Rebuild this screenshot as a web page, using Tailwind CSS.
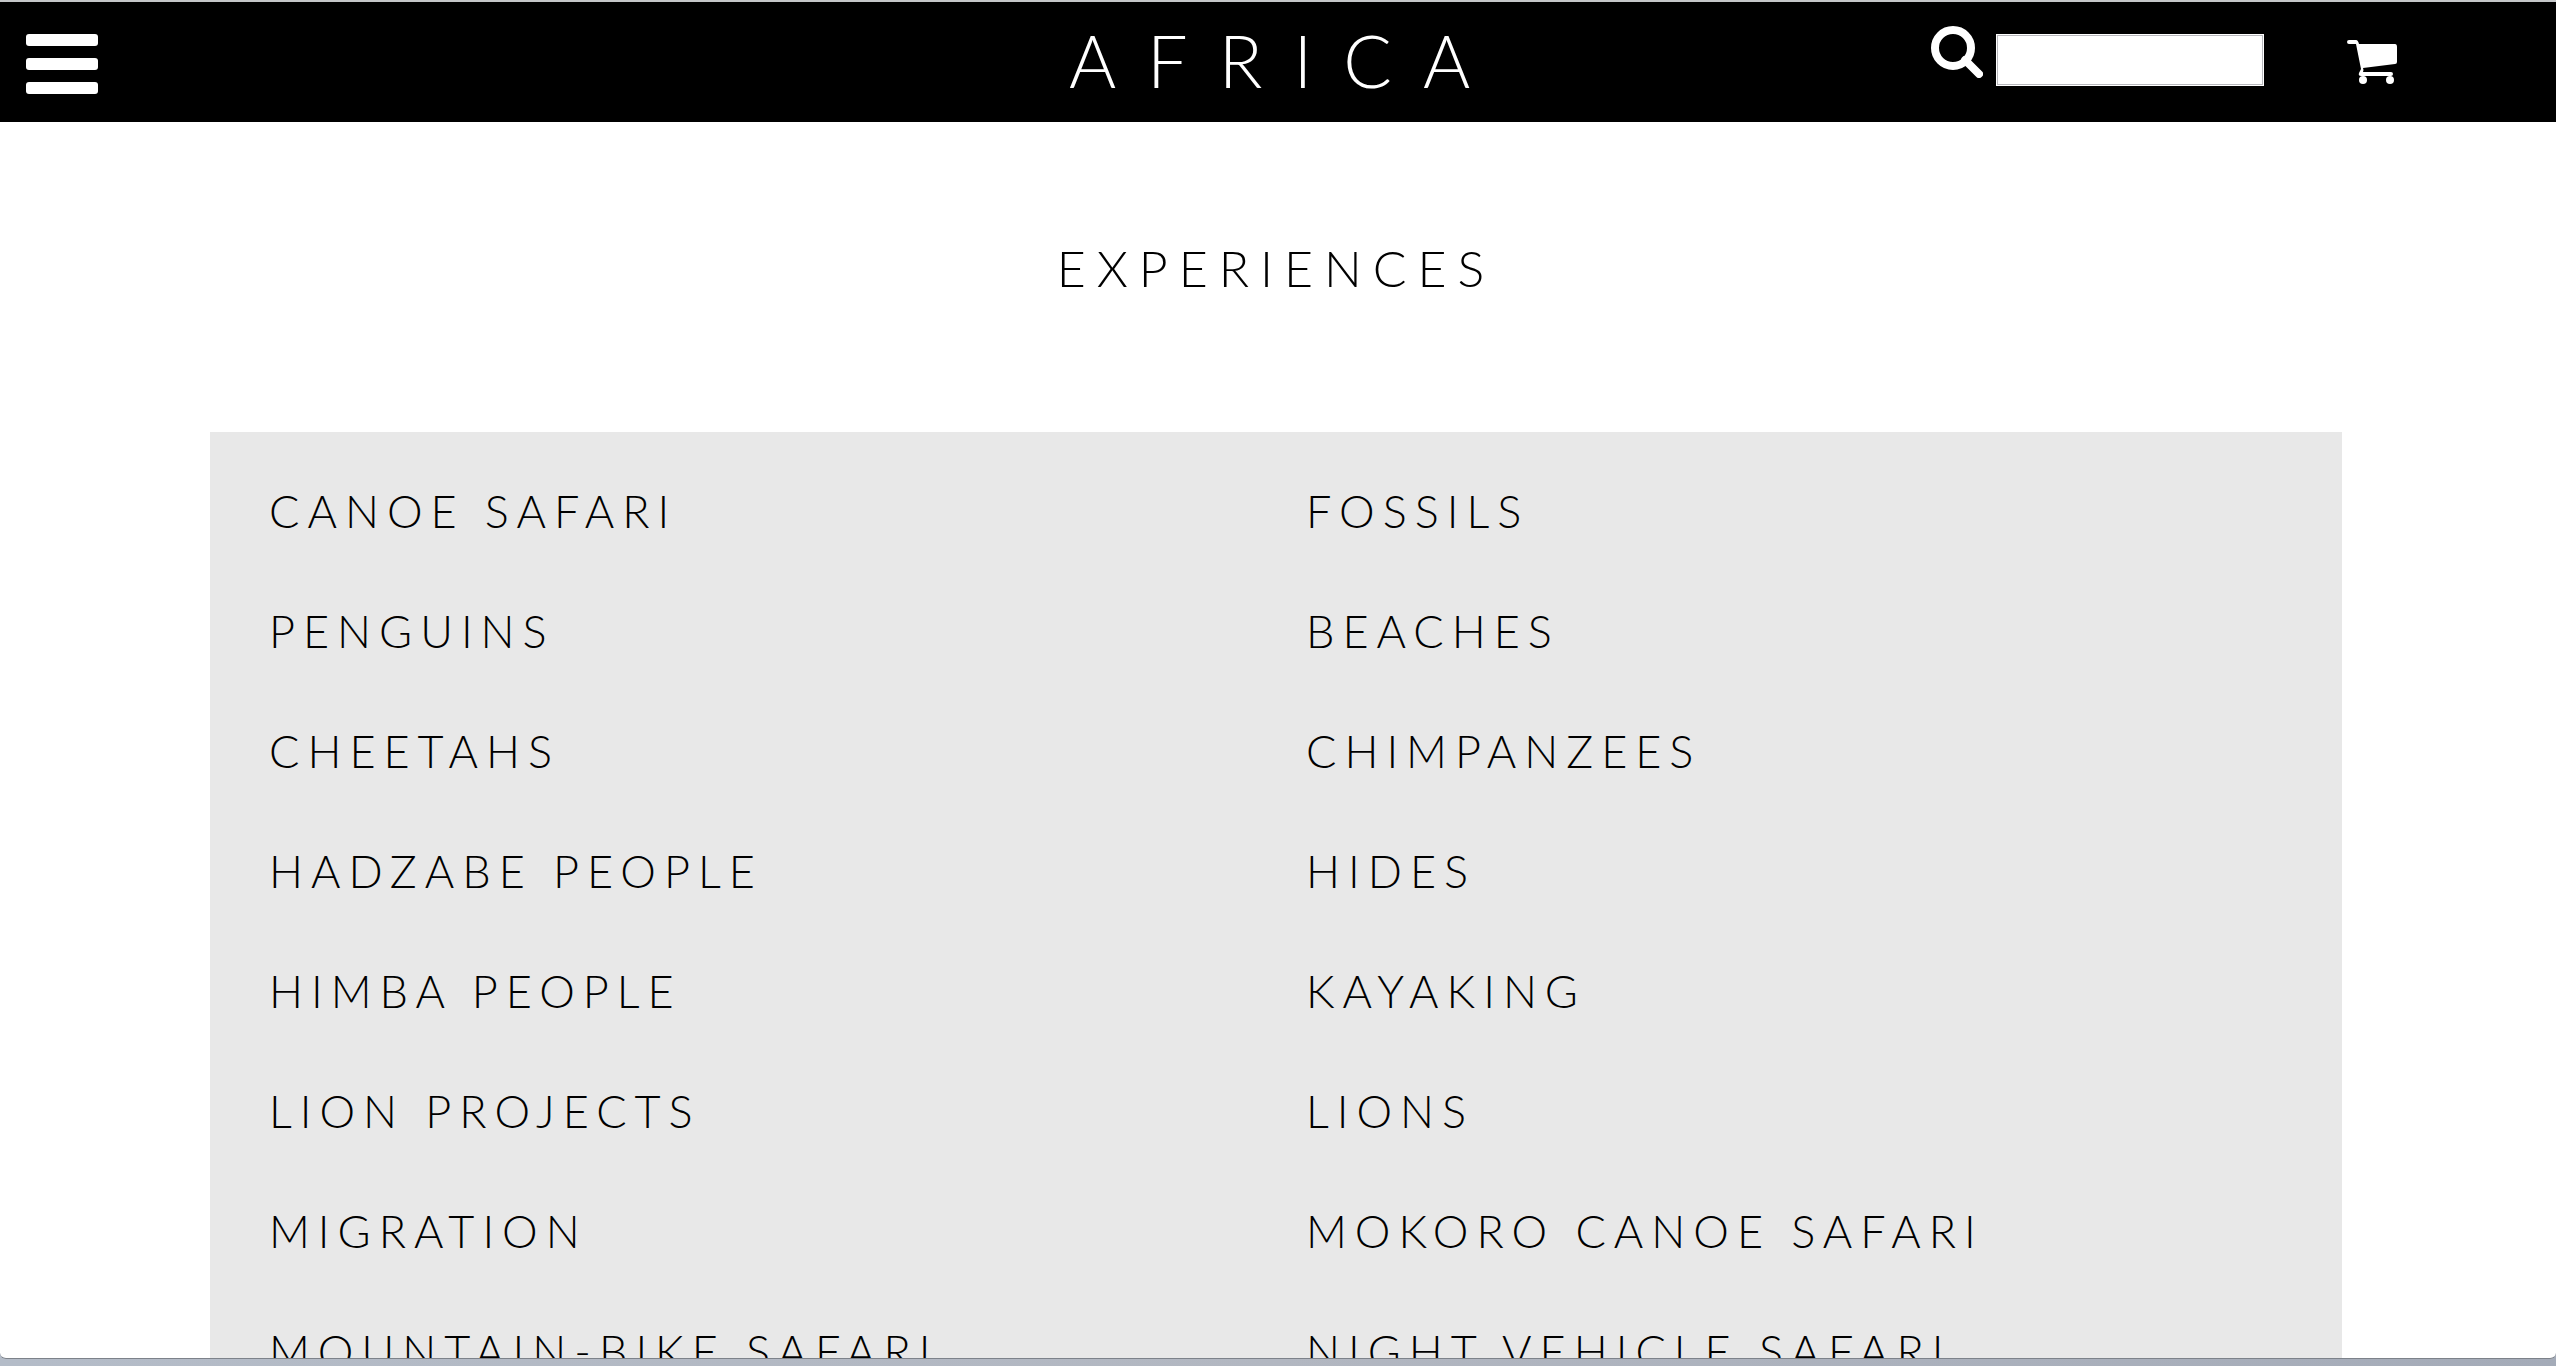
<!DOCTYPE html>
<html lang="en">
<head>
<meta charset="utf-8">
<title>Africa – Experiences</title>
<script src="https://cdn.jsdelivr.net/npm/@tailwindcss/browser@4"></script>
</head>
<body class="h-screen overflow-hidden bg-linear-to-r from-[#b4bcc8] via-[#b2b7c1] to-[#a4abb8] pb-[7px] font-['Lato',sans-serif] font-light text-black">
<div class="flex h-full flex-col overflow-hidden rounded-b-md border-t-2 border-b border-t-[#c4c6c8] border-b-[#7d828a] bg-white">
  <header class="grid h-[120px] shrink-0 grid-cols-[1fr_auto_1fr] items-center bg-black pb-1 text-white">
    <div class="pl-[26px]">
      <button type="button" aria-label="Menu" class="flex w-[72px] flex-col gap-3 pt-2">
        <span class="h-3 w-full rounded-[3px] bg-white"></span>
        <span class="h-3 w-full rounded-[3px] bg-white"></span>
        <span class="h-3 w-full rounded-[3px] bg-white"></span>
      </button>
    </div>
    <a href="#" class="pl-[14px] text-[72px] leading-[116px] tracking-[31px]">AFRICA</a>
    <div class="flex items-center justify-end pr-[156px]">
      <form class="flex items-start gap-[13px]">
        <button type="submit" aria-label="Search" class="-mt-2">
          <svg class="h-[52px] w-[52px]" viewBox="0 0 52 52" fill="none" stroke="#fff" stroke-width="8"><circle cx="22" cy="22" r="18"/><path d="M34 34l14 14" stroke-linecap="round"/></svg>
        </button>
        <input type="search" aria-label="Search" class="h-[52px] w-[268px] border border-white bg-white text-2xl text-black inset-ring inset-ring-[#b8b8bc] outline-none">
      </form>
      <a href="#" aria-label="Cart" class="ml-[83px] pt-1">
        <svg class="h-11 w-[53px]" viewBox="0 0 53 44" fill="#fff"><path d="M2 0h7q2 0 3 4h36q2 0 2 3v15q0 2-2 2l-32 4q1 2 0 4h28a2 2 0 0 1 0 4H14q-3 0-2-3l2-4L9 4H2a2 2 0 0 1 0-4z"/><circle cx="16" cy="40" r="4"/><circle cx="43" cy="40" r="4"/></svg>
      </a>
    </div>
  </header>
  <main class="min-h-0 flex-1 overflow-hidden pr-[214px] pl-[210px]">
    <h1 class="pt-[116px] text-center text-[50px] leading-[60px] tracking-[11px]">EXPERIENCES</h1>
    <ul class="mt-[134px] grid grid-cols-[1037px_1fr] bg-[#e8e8e8] pt-[19px] pl-[59px] text-[45px] leading-[120px] tracking-[8px]">
      <li><a href="#">CANOE SAFARI</a></li><li><a href="#">FOSSILS</a></li>
      <li><a href="#">PENGUINS</a></li><li><a href="#">BEACHES</a></li>
      <li><a href="#">CHEETAHS</a></li><li><a href="#">CHIMPANZEES</a></li>
      <li><a href="#">HADZABE PEOPLE</a></li><li><a href="#">HIDES</a></li>
      <li><a href="#">HIMBA PEOPLE</a></li><li><a href="#">KAYAKING</a></li>
      <li><a href="#">LION PROJECTS</a></li><li><a href="#">LIONS</a></li>
      <li><a href="#">MIGRATION</a></li><li><a href="#">MOKORO CANOE SAFARI</a></li>
      <li><a href="#">MOUNTAIN-BIKE SAFARI</a></li><li><a href="#">NIGHT VEHICLE SAFARI</a></li>
    </ul>
  </main>
</div>
</body>
</html>
